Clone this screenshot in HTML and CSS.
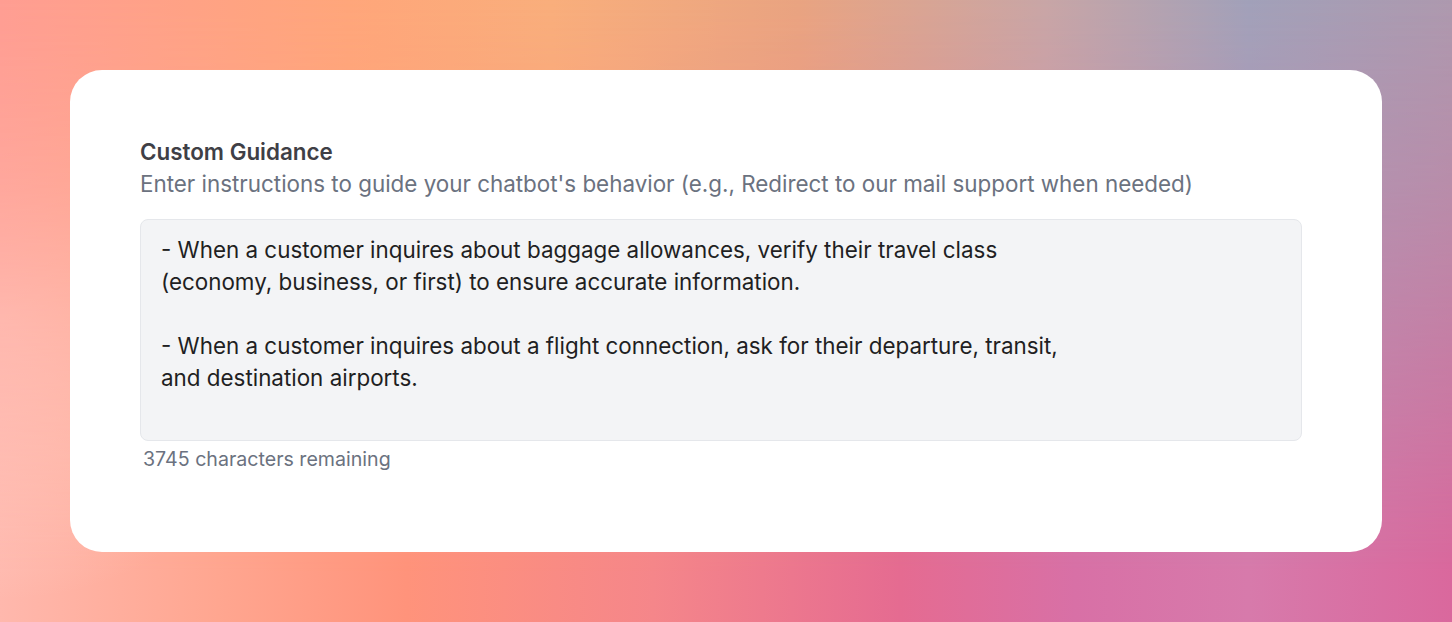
FILE: index.html
```html
<!DOCTYPE html>
<html lang="en">
<head>
<meta charset="utf-8">
<title>Custom Guidance</title>
<link rel="stylesheet" href="styles.css">
</head>
<body>
<div class="bg-top"></div>
<main class="card">
  <label class="title" for="guidance">Custom Guidance</label>
  <p class="hint">Enter instructions to guide your chatbot's behavior (e.g., Redirect to our mail support when needed)</p>
  <textarea id="guidance" class="field" spellcheck="false">- When a customer inquires about baggage allowances, verify their travel class
(economy, business, or first) to ensure accurate information.

- When a customer inquires about a flight connection, ask for their departure, transit,
and destination airports.</textarea>
  <p class="counter">3745 characters remaining</p>
</main>
</body>
</html>
```
FILE: styles.css
```css
* { box-sizing: border-box; }
html, body { height: 100%; }
body {
  margin: 0;
  padding: 70px;
  font-family: Inter, "Noto Sans", sans-serif;
  background:
    radial-gradient(ellipse 300px 280px at 0px 320px, rgba(255, 212, 204, 0.95), rgba(255, 212, 204, 0) 100%),
    linear-gradient(to right, #ffb8ad 0%, #ffa690 15%, #ff937b 28%, #f5868a 45%, #e56b91 62%, #d870a6 74%, #d77aab 86%, #da689d 100%);
  position: relative;
  overflow: hidden;
}
.bg-top {
  position: absolute;
  inset: 0;
  background: linear-gradient(to right, #ff9d92 0%, #ffa67a 24%, #f9ae7b 38%, #e9a481 55%, #c8a6a6 72%, #a1a1b9 86%, #ad99ae 100%);
  -webkit-mask-image: linear-gradient(to bottom, #000 0%, rgba(0,0,0,0.75) 30%, rgba(0,0,0,0.35) 65%, rgba(0,0,0,0) 92%);
  mask-image: linear-gradient(to bottom, #000 0%, rgba(0,0,0,0.75) 30%, rgba(0,0,0,0.35) 65%, rgba(0,0,0,0) 92%);
  pointer-events: none;
}
.card {
  position: relative;
  height: 482px;
  background: #ffffff;
  border-radius: 32px;
  padding: 66px 80px 0 70px;
  display: flex;
  flex-direction: column;
}
.title {
  font-size: 22.4px;
  line-height: 32px;
  font-weight: 600;
  color: #3f3f46;
}
.hint {
  margin: 0;
  font-size: 22.4px;
  line-height: 32px;
  color: #6b7280;
}
.field {
  margin-top: 19px;
  height: 222px;
  width: 100%;
  padding: 14px 20px;
  border: 1px solid #e5e7eb;
  border-radius: 8px;
  background: #f3f4f6;
  font-family: inherit;
  font-size: 22.4px;
  line-height: 32px;
  color: #1f1f23;
  resize: none;
  outline: none;
  overflow: hidden;
}
.counter {
  margin: 4px 0 0 3px;
  font-size: 19.6px;
  line-height: 28px;
  color: #6b7280;
}
```
